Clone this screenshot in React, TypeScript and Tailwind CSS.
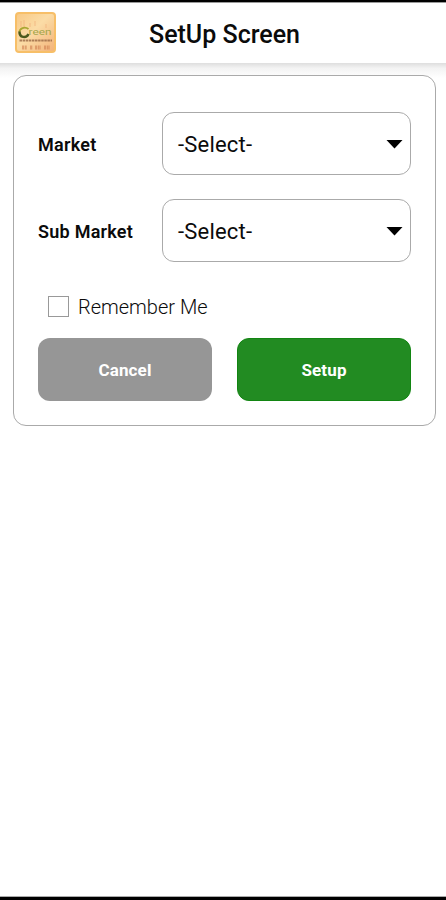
import { useState } from "react";

const fields = [
  { id: "market", label: "Market" },
  { id: "sub-market", label: "Sub Market" },
];

const Logo = () => {
  return (
    <svg width="42" height="42" viewBox="0 0 42 42" aria-hidden="true">
      <defs>
        <linearGradient id="tile" x1="0" y1="0" x2="1" y2="1">
          <stop offset="0" stopColor="#f8c985" />
          <stop offset="0.45" stopColor="#fbdca6" />
          <stop offset="1" stopColor="#f3b178" />
        </linearGradient>
      </defs>
      <rect x="1" y="1" width="39" height="39" rx="3" fill="url(#tile)" stroke="#f7bf68" strokeWidth="2" />
      <g stroke="#f2b37e" strokeWidth="1.5" opacity="0.5">
        <path d="M6 9v6M9 8v7M15 11v4M20 9v5M31 12v4" />
      </g>
      <path d="M13.500 17c-4-3-9-.5-9 3" fill="none" stroke="#a9a631" strokeWidth="1.800" />
      <path d="M4.500 19.500c-.3 6.500 7 7 9 2.500" fill="none" stroke="#4c5a1c" strokeWidth="2.500" />
      <text x="13.500" y="23" fontSize="8.500" fontFamily="Roboto, sans-serif" fontWeight="400" fill="#a5a64b" textLength="23" lengthAdjust="spacingAndGlyphs">
        reen
      </text>
      <path d="M4.500 28.500H37" stroke="#93613f" strokeWidth="2" strokeDasharray="2.500 .6" opacity="0.75" />
      <path d="M7 35.500h5M15 35.500h3M20 35.500h6M29 35.500h6" stroke="#cf7f51" strokeWidth="4" strokeDasharray="2 .7" opacity="0.6" />
    </svg>
  );
};

const SelectField = ({ id, label }: { id: string; label: string }) => {
  return (
    <div className="flex items-center">
      <span id={id} className="w-[124px] pt-[2px] text-[18px] font-semibold tracking-[0.25px]">
        {label}
      </span>
      <button
        aria-labelledby={id}
        className="flex h-[63px] flex-1 items-center justify-between rounded-[12px] border border-[#aaa] pt-[2px] pr-[7px] pl-[15px] text-[22px] tracking-[0.2px]"
      >
        -Select-
        <svg width="17" height="9" viewBox="0 0 17 9" aria-hidden="true">
          <path d="M.5 0h16L8.500 8.500z" fill="#000" />
        </svg>
      </button>
    </div>
  );
};

const SetupScreen = () => {
  const [remember, setRemember] = useState(false);

  return (
    <div className="flex h-[900px] w-[446px] flex-col overflow-hidden border-t-[2px] border-b-[3px] border-black bg-white font-[Roboto,sans-serif] text-[#0b0b0b]">
      <header className="grid h-[61px] shrink-0 grid-cols-[56px_1fr_68px] items-center border-t border-[#999] pl-[15px]">
        <Logo />
        <h1 className="pt-[3px] text-center text-[25px] font-medium">SetUp Screen</h1>
      </header>
      <div className="h-[15px] shrink-0 bg-linear-to-b from-[#dedede] via-[#f3f3f3] via-35% to-white" />

      <main className="mr-[10px] -mt-[3px] ml-[13px] rounded-[13px] border border-[#aaa] bg-white px-6 pt-9 pb-6">
        <div className="flex flex-col gap-6">
          {fields.map((field) => (
            <SelectField key={field.id} id={field.id} label={field.label} />
          ))}
        </div>

        <label className="mt-8 ml-[10px] flex h-[24px] items-center gap-[10px] text-[20px] font-light">
          <input
            type="checkbox"
            checked={remember}
            onChange={() => setRemember(!remember)}
            className="size-[21px] appearance-none border border-[#999] checked:bg-[#228b22]"
          />
          <span className="-ml-px pt-[2px]">Remember Me</span>
        </label>

        <div className="mt-5 grid grid-cols-2 gap-[25px] text-[17px] font-bold text-white">
          <button className="h-[63px] rounded-[12px] bg-[#969696] pt-[2px] tracking-[0.15px]">Cancel</button>
          <button className="h-[63px] rounded-[12px] border border-[#128512] bg-[#228b22] pt-[2px] tracking-[0.15px]">Setup</button>
        </div>
      </main>
      <div className="mt-auto h-px bg-[#aaa]" />
    </div>
  );
};

export default SetupScreen;
